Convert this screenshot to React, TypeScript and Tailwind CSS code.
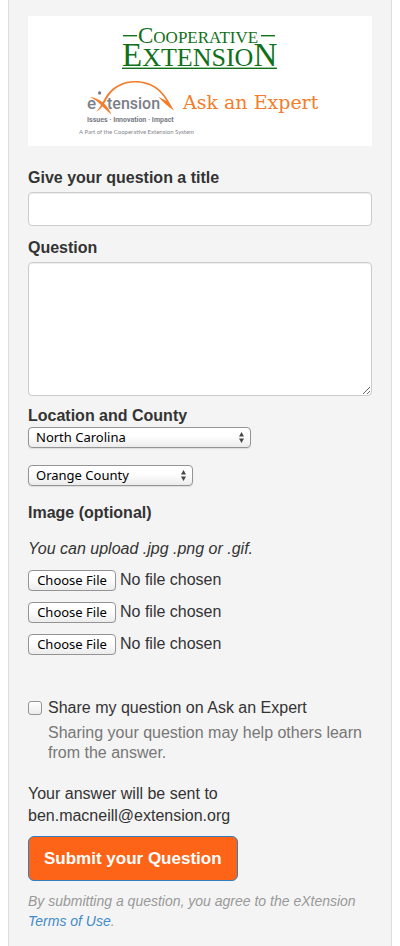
import type { ReactNode } from "react";

const bodyFont = "font-['Liberation_Sans',Arial,sans-serif]";
const controlFont = "font-['Noto_Sans','Open_Sans',sans-serif]";

function Logo() {
  return (
    <div className="flex justify-center bg-white">
      <svg width="344" height="130" viewBox="28 16 344 130" role="img" aria-label="Cooperative Extension, eXtension Ask an Expert">
        <g fill="#11701a" fontFamily="'Liberation Serif', serif">
          <rect x="123" y="35" width="14" height="1.400" />
          <rect x="261" y="35" width="14" height="1.400" />
          <text x="138" y="43" fontSize="17">
            <tspan fontSize="23">C</tspan>
            <tspan>OOPERATIVE</tspan>
          </text>
          <text x="122" y="66" fontSize="26">
            <tspan fontSize="33">E</tspan>
            <tspan>XTENSIO</tspan>
            <tspan fontSize="33">N</tspan>
          </text>
          <rect x="122" y="67.600" width="155" height="1.400" />
        </g>
        <g fill="#7b7e88" fontFamily="Roboto, sans-serif" fontWeight="500">
          <text x="87" y="109" fontSize="17">e</text>
          <text x="107" y="109" fontSize="16">tension</text>
          <circle cx="99.600" cy="93" r="1.700" />
        </g>
        <g fill="#f47c2a">
          <path d="M96 111.800C100 108 102 103 105 98C111 87 122 81 135 81C153 81 163 91 168.500 101L174 110.500C168 107 163 102 158.500 97C161.500 98.500 164 99.500 166.500 101C161 90.500 150 82.500 135 82.500C123 82.500 112.500 88.500 107 98.500C103.500 105 101 109.500 96 111.800Z" />
          <path d="M90 97C99 98 107 104 111.500 114.500C103.500 108.500 99 101 90 97Z" />
        </g>
        <text x="87" y="122" fontSize="7" fontWeight="700" fill="#777a83" fontFamily="Roboto, sans-serif">
          Issues · Innovation · Impact
        </text>
        <text x="79" y="134" fontSize="6" fill="#85878e" fontFamily="Lato, sans-serif">
          A Part of the Cooperative Extension System
        </text>
        <text x="183" y="109" fontSize="19" fill="#f47c2a" fontFamily="'DejaVu Serif', serif">
          Ask an Expert
        </text>
      </svg>
    </div>
  );
}

function MenuSelect({ label, value, width }: { label: string; value: string; width: string }) {
  return (
    <div className={`relative ${width}`}>
      <select
        aria-label={label}
        defaultValue={value}
        className={`block h-[21px] w-full appearance-none rounded border border-[#949494] bg-linear-to-b from-white from-40% to-[#ececec] pr-6 pl-[7px] text-[13px] leading-[19px] text-black shadow-[0_1px_1px_#00000018] ${controlFont}`}
      >
        <option>{value}</option>
      </select>
      <svg className="pointer-events-none absolute top-[5px] right-[6px]" width="7" height="11" viewBox="0 0 7 11" fill="#484848" aria-hidden="true">
        <path d="M3.500 0L6 4.500H1ZM3.500 11L6 6.500H1Z" />
      </svg>
    </div>
  );
}

function FileField({ index }: { index: number }) {
  return (
    <input
      type="file"
      aria-label={`Image ${index}`}
      className="block h-[22px] w-full text-base leading-[22px] file:mr-1 file:h-[21px] file:w-[88px] file:rounded file:border file:border-solid file:border-[#949494] file:bg-linear-to-b file:from-white file:from-40% file:to-[#ececec] file:p-0 file:text-center file:font-['Noto_Sans','Open_Sans',sans-serif] file:text-[13px] file:leading-[19px] file:text-black file:shadow-[0_1px_1px_#00000018]"
    />
  );
}

function Label({ htmlFor, children }: { htmlFor: string; children: ReactNode }) {
  return (
    <label htmlFor={htmlFor} className="mb-[3px] block font-bold">
      {children}
    </label>
  );
}

const fieldClass =
  "block w-full rounded border border-[#ccc] bg-white px-3 py-1 shadow-[inset_0_1px_1px_#00000013] outline-none";

export default function App() {
  return (
    <div className={`bg-white px-2 text-base leading-[22px] text-[#333] ${bodyFont}`}>
      <form className="min-h-screen border-x border-[#ddd] bg-[#f4f4f4] px-[19px] pt-4 pb-4" onSubmit={(e) => e.preventDefault()}>
        <Logo />

        <div className="mt-[21px]">
          <Label htmlFor="title">Give your question a title</Label>
          <input id="title" type="text" className={`h-[34px] ${fieldClass}`} />
        </div>

        <div className="mt-[11px]">
          <Label htmlFor="question">Question</Label>
          <textarea id="question" className={`h-[134px] resize ${fieldClass}`} />
        </div>

        <fieldset className="mt-[9px]">
          <legend className="font-bold">Location and County</legend>
          <div className="flex flex-col gap-[17px]">
            <MenuSelect label="Location" value="North Carolina" width="w-[223px]" />
            <MenuSelect label="County" value="Orange County" width="w-[165px]" />
          </div>
        </fieldset>

        <fieldset className="mt-4">
          <legend className="font-bold">Image (optional)</legend>
          <p className="mt-[14px] italic">You can upload .jpg .png or .gif.</p>
          <div className="mt-[9px] flex flex-col gap-[10px]">
            <FileField index={1} />
            <FileField index={2} />
            <FileField index={3} />
          </div>
        </fieldset>

        <div className="mt-[42px] flex gap-[6px]">
          <input
            id="share"
            type="checkbox"
            aria-describedby="share-hint"
            className="mt-1 size-[14px] shrink-0 appearance-none rounded-[3px] border border-[#949494] bg-linear-to-b from-white to-[#ececec] checked:bg-[#428bca]"
          />
          <div>
            <label htmlFor="share">Share my question on Ask an Expert</label>
            <p id="share-hint" className="mt-1 leading-5 text-[#777]">
              Sharing your question may help others learn from the answer.
            </p>
          </div>
        </div>

        <p className="mt-5">
          Your answer will be sent to
          <br />
          ben.macneill@extension.org
        </p>

        <button
          type="submit"
          className="mt-[9px] block h-[45px] rounded-md border border-[#357ebd] bg-[#fd6418] px-[15px] text-[17px] font-bold text-white"
        >
          Submit your Question
        </button>

        <p className="mt-[10px] text-sm leading-5 text-[#999] italic">
          By submitting a question, you agree to the eXtension{" "}
          <a href="#terms" className="text-[#428bca]">
            Terms of Use
          </a>
          .
        </p>
      </form>
    </div>
  );
}
